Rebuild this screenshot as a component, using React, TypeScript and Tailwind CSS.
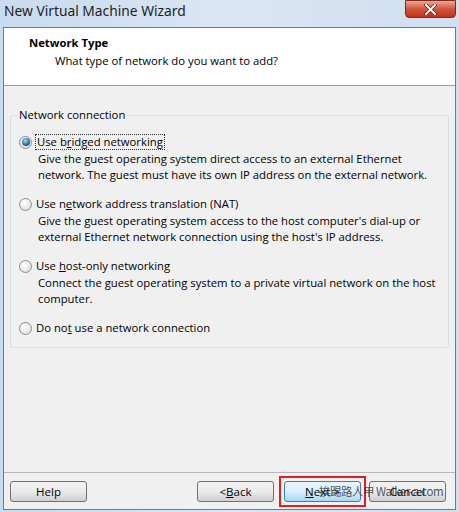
const font = "font-['Open_Sans','Noto_Sans',sans-serif]";

const opcoes = [
  {
    id: "bridged",
    label: (
      <>
        Use b<u>r</u>idged networking
      </>
    ),
    desc: [
      "Give the guest operating system direct access to an external Ethernet",
      "network. The guest must have its own IP address on the external network.",
    ],
    checked: true,
  },
  {
    id: "nat",
    label: (
      <>
        Use n<u>e</u>twork address translation (NAT)
      </>
    ),
    desc: [
      "Give the guest operating system access to the host computer's dial-up or",
      "external Ethernet network connection using the host's IP address.",
    ],
  },
  {
    id: "host",
    label: (
      <>
        Use <u>h</u>ost-only networking
      </>
    ),
    desc: [
      "Connect the guest operating system to a private virtual network on the host",
      "computer.",
    ],
  },
  {
    id: "none",
    label: (
      <>
        Do no<u>t</u> use a network connection
      </>
    ),
    desc: [],
  },
];

function Radio({ checked }: { checked?: boolean }) {
  return (
    <span className="w-[13px] h-[13px] rounded-full border border-[#8a8d90] bg-[radial-gradient(circle_at_40%_35%,#ffffff,#d6d6d6)] flex items-center justify-center shrink-0">
      {checked && (
        <span className="w-[8px] h-[8px] rounded-full bg-[radial-gradient(circle_at_40%_35%,#a9dcf7,#2d6f9e_55%,#0f3a5e)]" />
      )}
    </span>
  );
}

function Botao({ children, ativo }: { children: React.ReactNode; ativo?: boolean }) {
  return (
    <div
      className={
        ativo
          ? "w-[77px] h-[21px] rounded-[3px] border border-[#3c7fb1] bg-gradient-to-b from-[#eaf6fd] via-[#d9f0fc] to-[#a7d9f5] flex items-center justify-center text-[11.5px] text-black"
          : "w-[77px] h-[21px] rounded-[3px] border border-[#707070] bg-gradient-to-b from-[#f2f2f2] via-[#ebebeb] to-[#cfcfcf] flex items-center justify-center text-[11.5px] text-black"
      }
    >
      {children}
    </div>
  );
}

export default function App() {
  return (
    <div className={`w-[459px] h-[512px] bg-gradient-to-r from-[#c9dbee] via-[#dae6f3] to-[#cfdff0] flex flex-col ${font}`}>
      {/* barra de título */}
      <div className="h-[27px] flex items-start justify-between">
        <span className="pl-[4px] pt-[1px] text-[13.8px] leading-[20px] text-[#1e1e1e] font-['Noto_Sans',sans-serif] whitespace-nowrap">
          New Virtual Machine Wizard
        </span>
        <div className="mr-[3px] w-[51px] h-[18px] rounded-b-[4px] border border-[#7a2a1e] bg-gradient-to-b from-[#eba694] via-[#d2543a] to-[#c0311b] flex items-center justify-center">
          <svg width="13" height="11" viewBox="0 0 13 11">
            <path d="M2 1 L11 10 M11 1 L2 10" stroke="#5a1a10" strokeWidth="3.4" strokeLinecap="square" />
            <path d="M2 1 L11 10 M11 1 L2 10" stroke="#ffffff" strokeWidth="2" strokeLinecap="square" />
          </svg>
        </div>
      </div>

      {/* corpo */}
      <div className="flex-1 mx-[3px] mb-[2px] border border-[#6e7b88] bg-[#f0f0f0] flex flex-col text-[11.3px] text-black whitespace-nowrap">
        {/* cabeçalho */}
        <div className="h-[58px] shrink-0 bg-white border-b border-[#a0a0a0] pl-[25px] pt-[7px]">
          <div className="font-bold leading-[16px]">Network Type</div>
          <div className="pl-[26px] pt-[2px] leading-[16px]">What type of network do you want to add?</div>
        </div>

        {/* grupo */}
        <div className="px-[6px] pt-[29px]">
          <div className="relative h-[233px] border border-[#d5dfe5] rounded-[3px] pl-[8px] pt-[18px]">
            <span className="absolute left-[6px] top-[-9px] px-[2px] bg-[#f0f0f0] leading-[16px]">
              Network connection
            </span>
            <div className="flex flex-col gap-[14px]">
              {opcoes.map((o) => (
                <div key={o.id} className="flex flex-col">
                  <div className="flex items-center h-[16px]">
                    <Radio checked={o.checked} />
                    <span
                      className={
                        o.checked
                          ? "ml-[3px] px-[1px] leading-[14px] border border-dotted border-[#333]"
                          : "ml-[4px] leading-[16px]"
                      }
                    >
                      {o.label}
                    </span>
                  </div>
                  {o.desc.length > 0 && (
                    <div className="pl-[19px] pt-[1px] leading-[15.5px]">
                      {o.desc.map((d) => (
                        <div key={d}>{d}</div>
                      ))}
                    </div>
                  )}
                </div>
              ))}
            </div>
          </div>
        </div>

        <div className="flex-1" />

        {/* rodapé */}
        <div className="relative h-[37px] shrink-0 border-t border-[#b8b8b8] flex items-start pt-[8px] pl-[6px] pr-[9px]">
          <Botao>Help</Botao>
          <div className="flex-1" />
          <Botao>
            &lt; <u>B</u>ack
          </Botao>
          <div className="ml-[10px] outline-2 outline-[#e02020] outline-offset-[3px]">
            <Botao ativo>
              <u>N</u>ext &gt;
            </Botao>
          </div>
          <div className="ml-[8px]">
            <Botao>Cancel</Botao>
          </div>
          {/* marca d'água */}
          <span className="absolute left-[315px] top-[10px] text-[11.5px] leading-[16px] text-[#2a2a2a]/80 font-['Noto_Sans_CJK_TC','Noto_Sans',sans-serif] tracking-[-0.5px]">
            挨踢路人甲 Walker-a.com
          </span>
        </div>
      </div>
    </div>
  );
}
